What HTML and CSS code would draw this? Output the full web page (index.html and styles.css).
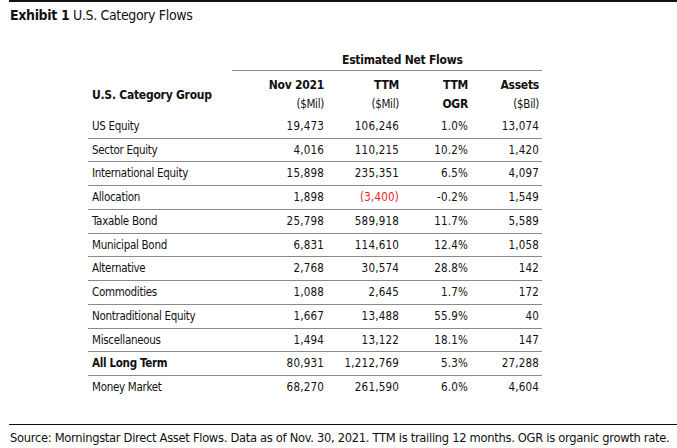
FILE: index.html
```html
<!DOCTYPE html>
<html>
<head>
<meta charset="utf-8">
<link rel="stylesheet" href="styles.css">
</head>
<body>
<div class="page">
  <div class="title"><b>Exhibit 1</b> U.S. Category Flows</div>
  <table class="flows">
    <colgroup>
      <col class="c-label">
      <col class="c-nov">
      <col class="c-ttm">
      <col class="c-ogr">
      <col class="c-assets">
    </colgroup>
    <thead>
      <tr class="group">
        <th class="blank"></th>
        <th class="grouphead" colspan="4"><span>Estimated Net Flows</span></th>
      </tr>
      <tr class="cols">
        <th class="label">U.S. Category Group</th>
        <th class="num">Nov 2021<br><span class="unit">($Mil)</span></th>
        <th class="num">TTM<br><span class="unit">($Mil)</span></th>
        <th class="num">TTM<br>OGR</th>
        <th class="num">Assets<br><span class="unit">($Bil)</span></th>
      </tr>
    </thead>
    <tbody>
      <tr><td>US Equity</td><td>19,473</td><td>106,246</td><td>1.0%</td><td>13,074</td></tr>
      <tr><td>Sector Equity</td><td>4,016</td><td>110,215</td><td>10.2%</td><td>1,420</td></tr>
      <tr><td>International Equity</td><td>15,898</td><td>235,351</td><td>6.5%</td><td>4,097</td></tr>
      <tr><td>Allocation</td><td>1,898</td><td class="neg">(3,400)</td><td>-0.2%</td><td>1,549</td></tr>
      <tr><td>Taxable Bond</td><td>25,798</td><td>589,918</td><td>11.7%</td><td>5,589</td></tr>
      <tr><td>Municipal Bond</td><td>6,831</td><td>114,610</td><td>12.4%</td><td>1,058</td></tr>
      <tr><td>Alternative</td><td>2,768</td><td>30,574</td><td>28.8%</td><td>142</td></tr>
      <tr><td>Commodities</td><td>1,088</td><td>2,645</td><td>1.7%</td><td>172</td></tr>
      <tr><td>Nontraditional Equity</td><td>1,667</td><td>13,488</td><td>55.9%</td><td>40</td></tr>
      <tr><td>Miscellaneous</td><td>1,494</td><td>13,122</td><td>18.1%</td><td>147</td></tr>
      <tr class="total"><td>All Long Term</td><td>80,931</td><td>1,212,769</td><td>5.3%</td><td>27,288</td></tr>
      <tr class="last"><td>Money Market</td><td>68,270</td><td>261,590</td><td>6.0%</td><td>4,604</td></tr>
    </tbody>
  </table>
  <div class="source">Source: Morningstar Direct Asset Flows. Data as of Nov. 30, 2021. TTM is trailing 12 months. OGR is organic growth rate.</div>
</div>
</body>
</html>
```
FILE: styles.css
```css
html, body {
  margin: 0;
  padding: 0;
  background: #ffffff;
}
body {
  font-family: "DejaVu Sans Condensed", "Liberation Sans", sans-serif;
  font-stretch: condensed;
  color: #111111;
  font-size: 11.5px;
  letter-spacing: -0.3px;
}
.page {
  margin-left: 9px;
  width: 668px;
  border-top: 2px solid #111111;
}
.title {
  font-size: 14px;
  letter-spacing: -0.35px;
  line-height: 20px;
  padding: 3px 0 0 1px;
  height: 22px;
}
.flows {
  margin-left: 79px;
  margin-top: 23px;
  border-collapse: collapse;
  table-layout: fixed;
  width: 454px;
}
.c-label { width: 144px; }
.c-nov { width: 95px; }
.c-ttm { width: 75px; }
.c-ogr { width: 69px; }
.c-assets { width: 71px; }
.flows th, .flows td {
  padding: 0 3px 0 4px;
  white-space: nowrap;
}
.flows th {
  font-size: 12px;
  letter-spacing: -0.25px;
}
.group th {
  height: 20px;
  line-height: 20px;
  padding: 0;
  font-weight: bold;
}
.grouphead {
  border-bottom: 1px solid #8a8a8a;
  text-align: left;
}
.grouphead span {
  padding-left: 110px;
}
.cols th {
  line-height: 19px;
  padding-top: 5px;
  padding-bottom: 1px;
  vertical-align: top;
  font-weight: bold;
}
.cols th.label {
  text-align: left;
  vertical-align: middle;
  padding-top: 6px;
  padding-left: 4px;
}
.cols th.num {
  text-align: right;
}
.unit {
  font-weight: normal;
  font-size: 11.5px;
  letter-spacing: -0.3px;
}
.flows tbody td {
  line-height: 22.74px;
  height: 22.74px;
  padding-top: 0;
  padding-bottom: 0;
  border-bottom: 1px solid #8a8a8a;
  text-align: right;
  letter-spacing: 0.2px;
}
.flows tbody td:first-child {
  text-align: left;
  letter-spacing: -0.3px;
}
.flows tbody tr.last td {
  border-bottom: none;
}
.flows tr.total td:first-child {
  font-weight: bold;
}
.flows td.neg {
  color: #ee1c25;
}
.source {
  margin-top: 25px;
  border-top: 1px solid #111111;
  padding: 4px 0 0 1px;
  line-height: 17px;
  font-size: 12.8px;
  letter-spacing: -0.3px;
  white-space: nowrap;
}
```
